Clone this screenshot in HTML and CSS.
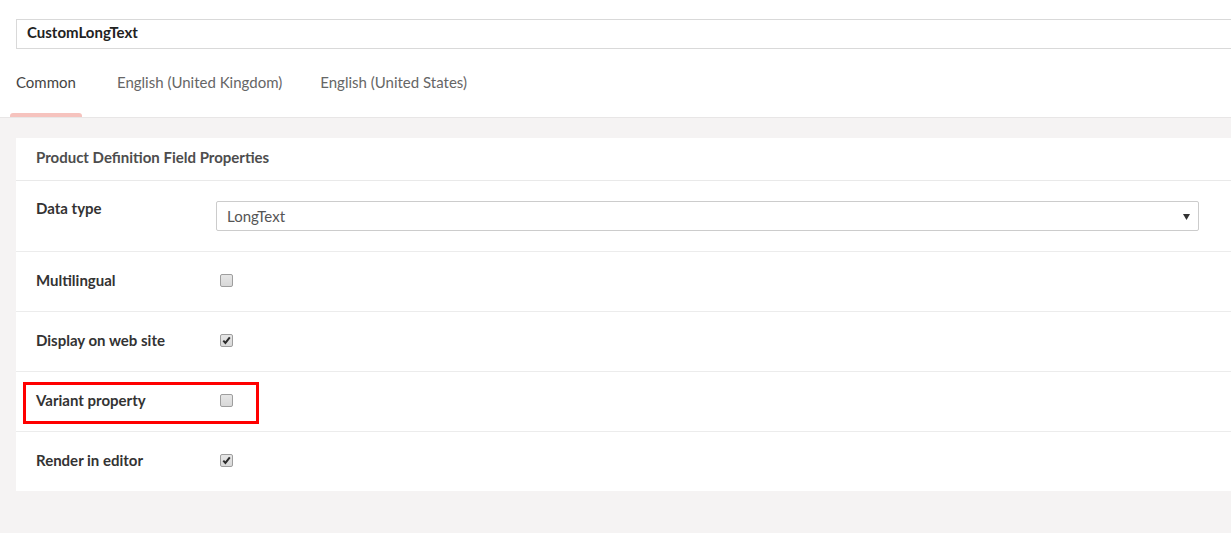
FILE: index.html
```html
<!DOCTYPE html>
<html lang="en">
<head>
<meta charset="utf-8">
<title>CustomLongText</title>
<link rel="stylesheet" href="styles.css">
</head>
<body>
<div class="page">
  <div class="top">
    <div class="name-input">CustomLongText</div>
    <nav class="tabs">
      <div class="tab active">Common</div>
      <div class="tab">English (United Kingdom)</div>
      <div class="tab">English (United States)</div>
    </nav>
  </div>
  <div class="content">
    <section class="card">
      <header class="card-head">Product Definition Field Properties</header>
      <div class="row row-select">
        <div class="label">Data type</div>
        <div class="control">
          <div class="select">
            <span>LongText</span>
            <svg class="caret" width="7" height="6" viewBox="0 0 7 6"><path d="M0 0H7L3.5 6Z" fill="#333"/></svg>
          </div>
        </div>
      </div>
      <div class="row">
        <div class="label">Multilingual</div>
        <div class="control"><span class="check"></span></div>
      </div>
      <div class="row">
        <div class="label">Display on web site</div>
        <div class="control"><span class="check"><svg width="11" height="11" viewBox="0 0 11 11"><path d="M2.3 5.6 L4.4 7.9 L8.8 2.4" fill="none" stroke="#2a2a2a" stroke-width="2"/></svg></span></div>
      </div>
      <div class="row">
        <div class="label">Variant property</div>
        <div class="control"><span class="check"></span></div>
        <div class="highlight"></div>
      </div>
      <div class="row last">
        <div class="label">Render in editor</div>
        <div class="control"><span class="check"><svg width="11" height="11" viewBox="0 0 11 11"><path d="M2.3 5.6 L4.4 7.9 L8.8 2.4" fill="none" stroke="#2a2a2a" stroke-width="2"/></svg></span></div>
      </div>
    </section>
  </div>
</div>
</body>
</html>
```

FILE: styles.css
```css
* { box-sizing: border-box; }
html, body { margin: 0; padding: 0; }
body {
  background: #fff;
  font-family: Lato, "Open Sans", "Liberation Sans", sans-serif;
  font-size: 15px;
  color: #333;
  overflow: hidden;
}
.page { width: 1231px; height: 533px; display: flex; flex-direction: column; }
.top { padding: 19px 0 0 16px; }
.name-input {
  height: 30px;
  margin-right: -10px;
  border: 1px solid #d9d9d9;
  padding: 0 10px;
  line-height: 25px;
  font-weight: 700;
  color: #222;
}
.tabs { display: flex; margin-left: -6px; }
.tab {
  display: flex;
  flex-direction: column;
  padding: 23px 6px 0;
  line-height: 20px;
  color: #666;
  margin-right: 26px;
}
.tab:first-child { margin-right: 29px; }
.tab::after {
  content: "";
  display: block;
  height: 4px;
  margin: 21px -6px 0;
  border-radius: 3px 3px 0 0;
}
.tab.active { color: #444; }
.tab.active::after { background: #f6c3be; }
.content {
  flex: 1;
  background: #f5f3f3;
  border-top: 1px solid #e8e6e6;
  padding: 20px 0 0 16px;
}
.card {
  background: #fff;
  margin-right: -10px;
}
.card-head {
  padding: 9px 20px 13px;
  line-height: 20px;
  font-weight: 700;
  color: #4d4d4d;
  border-bottom: 1px solid #e9e9e9;
}
.row {
  position: relative;
  display: flex;
  align-items: flex-start;
  padding: 18px 20px 21px;
  border-bottom: 1px solid #ececec;
}
.row.last { border-bottom: none; }
.row-select { padding: 20px 20px 20px; }
.label {
  width: 180px;
  flex: none;
  line-height: 20px;
  font-weight: 700;
  color: #333;
}
.row-select .label { line-height: 14px; }
.control { flex: 1; display: flex; align-items: center; height: 20px; }
.row-select .control { height: auto; padding-right: 22px; }
.select {
  flex: 1;
  height: 30px;
  border: 1px solid #ccc;
  border-radius: 2px;
  display: flex;
  align-items: center;
  justify-content: space-between;
  padding: 0 8px 0 10px;
  color: #555;
}
.caret { display: block; margin-top: 1px; }
.check {
  width: 13px;
  height: 13px;
  margin: 1px 0 0 4px;
  border: 1px solid #9e9e9e;
  border-radius: 2px;
  background: linear-gradient(#e6e6e6, #d8d8d8);
  display: flex;
  align-items: center;
  justify-content: center;
}
.check svg { display: block; }
.highlight {
  position: absolute;
  left: 7px;
  top: 10px;
  width: 236px;
  height: 42px;
  border: 3px solid #f00;
}
```
